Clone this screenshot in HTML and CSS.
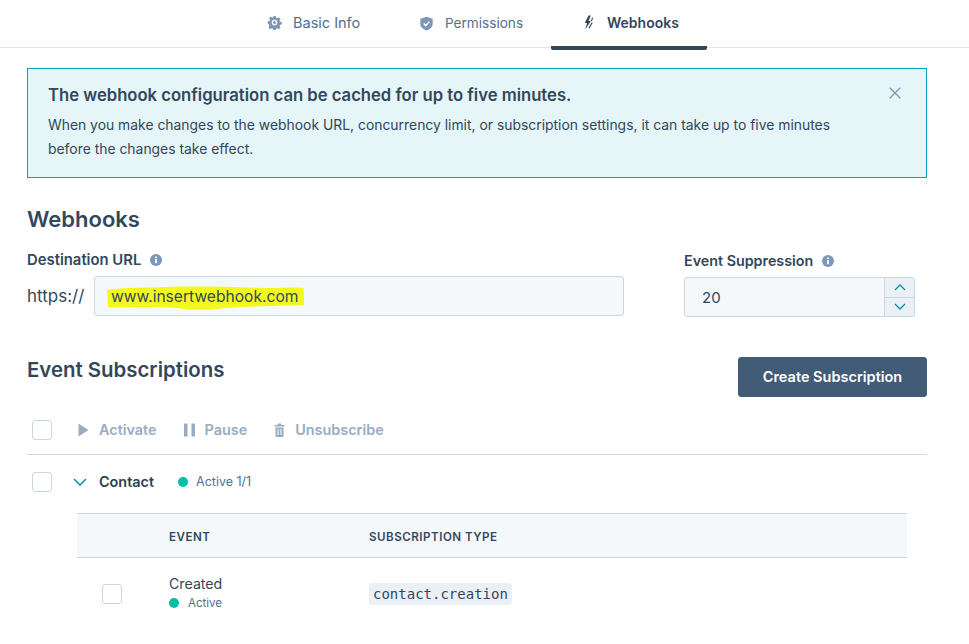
FILE: index.html
```html
<!DOCTYPE html>
<html lang="en">
<head>
<meta charset="utf-8">
<title>Webhooks</title>
<link rel="stylesheet" href="styles.css">
</head>
<body>
<nav class="tabs">
  <a class="tab tab-basic"><svg class="tab-icon" viewBox="0 0 16 16"><path fill="#7c98b6" fill-rule="evenodd" d="M6.7 1h2.6l.4 1.900 1.200.5 1.700-1 1.800 1.800-1 1.700.5 1.200 1.900.4v2.600l-1.900.4-.5 1.200 1 1.700-1.800 1.800-1.700-1-1.200.5-.4 1.900H6.700l-.4-1.900-1.200-.5-1.700 1-1.800-1.800 1-1.700-.5-1.200L.8 9.300V6.700l1.900-.4.5-1.200-1-1.700 1.800-1.800 1.700 1 1.200-.5zM8 5a3 3 0 1 0 0 6 3 3 0 0 0 0-6z"/><circle cx="8" cy="8" r="1.600" fill="#7c98b6"/></svg>Basic Info</a>
  <a class="tab tab-perm"><svg class="tab-icon" viewBox="0 0 16 16"><path fill="#7c98b6" d="M8 .8 14.600 3v5c0 3.700-2.700 6.200-6.600 7.400C4.100 14.200 1.400 11.700 1.400 8V3z"/><path fill="none" stroke="#fff" stroke-width="1.600" d="m5 8 2.200 2.200L11 6.200"/></svg>Permissions</a>
  <a class="tab tab-active"><svg class="tab-icon" viewBox="0 0 16 16"><path fill="#33475b" d="M8 .5 4 8.500h2.500L4.500 15.500l6-9H8L10.500.5z"/><path fill="none" stroke="#33475b" stroke-width="1.200" d="M12.500 3 11 6.500M12 8l-3.500 6"/></svg>Webhooks</a>
</nav>
<main class="content">
  <section class="alert">
    <h2 class="alert-title">The webhook configuration can be cached for up to five minutes.</h2>
    <p class="alert-text">When you make changes to the webhook URL, concurrency limit, or subscription settings, it can take up to five minutes before the changes take effect.</p>
    <svg class="alert-close" viewBox="0 0 12 12"><path fill="none" stroke="#7c98b6" stroke-width="1.300" d="m.7.7 10.600 10.600M11.300.7.700 11.300"/></svg>
  </section>

  <h1 class="section-title">Webhooks</h1>

  <div class="fields">
    <div class="field-url">
      <div class="field-label">Destination URL<svg class="info" viewBox="0 0 12 12"><circle cx="6" cy="6" r="6" fill="#7c98b6"/><rect x="5.100" y="5" width="1.800" height="4.200" fill="#fff"/><circle cx="6" cy="3.300" r="1" fill="#fff"/></svg></div>
      <div class="url-row">
        <span class="prefix">https://</span>
        <div class="input url-input"><span class="marker"><svg class="marker-ink" viewBox="0 0 198 24" preserveAspectRatio="none"><path fill="#f4f91d" d="M1 4C20 1 40 2 60 1c30-1 70 0 100 1 15 0 30-1 37 0l1 17c-28 1-48 1-78 3-20 2-35 2-50 0-25-2-50 0-68-1z"/></svg>www.insertwebhook.com</span></div>
      </div>
    </div>
    <div class="field-num">
      <div class="field-label">Event Suppression<svg class="info" viewBox="0 0 12 12"><circle cx="6" cy="6" r="6" fill="#7c98b6"/><rect x="5.100" y="5" width="1.800" height="4.200" fill="#fff"/><circle cx="6" cy="3.300" r="1" fill="#fff"/></svg></div>
      <div class="input num-input">
        <span class="num-value">20</span>
        <div class="stepper">
          <span class="step"><svg viewBox="0 0 12 7"><path fill="none" stroke="#0091ae" stroke-width="1.300" d="m1 6 5-5 5 5"/></svg></span>
          <span class="step"><svg viewBox="0 0 12 7"><path fill="none" stroke="#0091ae" stroke-width="1.300" d="m1 1 5 5 5-5"/></svg></span>
        </div>
      </div>
    </div>
  </div>

  <div class="subs-head">
    <h2 class="subs-title">Event Subscriptions</h2>
    <button class="primary">Create Subscription</button>
  </div>

  <div class="toolbar">
    <span class="check"></span>
    <span class="action action-first"><svg viewBox="0 0 10 14"><path fill="#99acc2" d="M0 .5 10 7 0 13.500z"/></svg>Activate</span>
    <span class="action"><svg viewBox="0 0 11 14"><rect x="0" y=".5" width="3.500" height="13" fill="#99acc2"/><rect x="7.500" y=".5" width="3.500" height="13" fill="#99acc2"/></svg>Pause</span>
    <span class="action"><svg viewBox="0 0 10 14"><path fill="#99acc2" d="M3.500.5h3l.5 1.500h3v1.500H0V2h3zM1 4.500h8V13a1 1 0 0 1-1 1H2a1 1 0 0 1-1-1zm2 1.500v6h1V6zm3 0v6h1V6z"/></svg>Unsubscribe</span>
  </div>

  <div class="group">
    <span class="check"></span>
    <svg class="caret" viewBox="0 0 14 8"><path fill="none" stroke="#0091ae" stroke-width="1.500" d="m1 1 6 6 6-6"/></svg>
    <span class="group-name">Contact</span>
    <span class="dot dot-group"></span>
    <span class="status">Active 1/1</span>
  </div>

  <div class="table">
    <div class="thead">
      <span class="col-event">EVENT</span>
      <span class="col-type">SUBSCRIPTION TYPE</span>
    </div>
    <div class="row">
      <span class="check row-check"></span>
      <div class="col-event">
        <div class="event-name">Created</div>
        <div class="event-status"><span class="dot dot-row"></span>Active</div>
      </div>
      <div class="col-type"><code class="code">contact.creation</code></div>
    </div>
  </div>
</main>
</body>
</html>
```
FILE: styles.css
```css
* { box-sizing: border-box; }
html, body { margin: 0; height: 644px; overflow: hidden; }
body { background: #fff; color: #33475b; font-family: "Inter", "Liberation Sans", sans-serif; }

.tabs { height: 48px; border-bottom: 1px solid #dfe3eb; display: flex; padding-left: 231px; }
.tab { display: flex; align-items: center; height: 47px; font-size: 14px; color: #516f90; padding-bottom: 1px; }
.tab-icon { width: 15px; height: 15px; margin-right: 11px; flex: none; }
.tab-basic { width: 152px; padding: 0 0 2px 36px; font-size: 14.500px; }
.tab-perm { width: 168px; padding-left: 36px; font-size: 13.600px; }
.tab-active { width: 156px; height: 50px; padding-left: 30px; padding-bottom: 1px; font-weight: 600; color: #33475b; border-bottom: 4px solid #33475b; border-radius: 2px; }

.content { padding: 20px 42px 0 27px; }

.alert { position: relative; height: 110px; background: #e5f5f8; border: 1px solid #00a4bd; padding: 14px 20px 0; }
.alert-title { margin: 0 0 6px; font-size: 16.650px; line-height: 24px; font-weight: 600; color: #33475b; }
.alert-text { margin: 0; width: 800px; font-size: 13.900px; line-height: 24px; color: #33475b; }
.alert-close { position: absolute; top: 18px; right: 25px; width: 12px; height: 12px; }

.section-title { margin: 27px 0 0; font-size: 22px; line-height: 28px; font-weight: 600; color: #33475b; }

.fields { display: flex; margin-top: 18px; }
.field-url { width: 657px; }
.field-num { width: 231px; }
.field-label { display: flex; align-items: center; font-size: 14.850px; line-height: 18px; font-weight: 600; color: #33475b; height: 18px; }
.field-num .field-label { margin-top: 1px; font-size: 14.300px; }
.info { width: 12px; height: 12px; margin-left: 9px; }

.url-row { display: flex; align-items: center; margin-top: 7px; }
.prefix { width: 67px; font-size: 17px; color: #33475b; }
.input { height: 40px; background: #f5f8fa; border: 1px solid #cbd6e2; border-radius: 3px; font-size: 15px; color: #33475b; }
.url-input { width: 530px; display: flex; align-items: center; padding-left: 11px; font-size: 15.600px; }
.marker { position: relative; isolation: isolate; padding: 2px 6px 2px 5px; line-height: 19px; }
.marker-ink { position: absolute; z-index: -1; left: 0; top: 1px; width: 100%; height: 24px; }
.num-input { width: 231px; margin-top: 7px; display: flex; align-items: center; padding-left: 17px; position: relative; }
.num-value { flex: 1; }
.stepper { width: 30px; height: 38px; border-left: 1px solid #cbd6e2; display: flex; flex-direction: column; background: #eaf0f6; border-radius: 0 3px 3px 0; }
.step { flex: 1; display: flex; align-items: center; justify-content: center; }
.step + .step { border-top: 1px solid #cbd6e2; }
.step svg { width: 12px; height: 7px; }

.subs-head { display: flex; justify-content: space-between; align-items: center; margin-top: 40px; height: 40px; }
.subs-title { margin: 0 0 14px; font-size: 20.400px; font-weight: 600; line-height: 26px; color: #33475b; }
.primary { width: 189px; height: 40px; padding-bottom: 2px; background: #425b76; color: #fff; border: 1px solid #425b76; border-radius: 3px; font: 600 14.500px "Inter", "Liberation Sans", sans-serif; }

.check { display: block; width: 20px; height: 20px; border: 1px solid #cbd6e2; border-radius: 3px; background: #fff; flex: none; }

.toolbar { display: flex; align-items: center; height: 53px; margin-top: 5px; padding: 3px 0 0 5px; border-bottom: 1px solid #cbd6e2; font-size: 14.400px; font-weight: 600; color: #99acc2; }
.action { display: flex; align-items: center; margin-right: 27px; }
.action svg { height: 14px; width: 11px; margin-right: 10px; }
.action-first { margin-left: 26px; }

.group { display: flex; align-items: center; height: 53px; padding-left: 5px; }
.caret { width: 14px; height: 8px; margin-left: 21px; }
.group-name { margin-left: 12px; font-size: 14.400px; font-weight: 600; color: #2e3f50; }
.dot { display: inline-block; width: 10px; height: 10px; border-radius: 50%; background: #00bda5; flex: none; }
.dot-group { margin-left: 24px; }
.status { margin-left: 8px; font-size: 12.500px; color: #516f90; }

.table { margin: 5px 20px 0 50px; }
.thead { display: flex; align-items: center; height: 45px; padding-top: 2px; background: #f5f8fa; border-top: 1px solid #cbd6e2; border-bottom: 1px solid #cbd6e2; font-size: 11.600px; font-weight: 600; letter-spacing: .5px; color: #33475b; }
.col-event { margin-left: 92px; width: 200px; }
.col-type { flex: none; }
.row { display: flex; align-items: center; height: 72px; }
.row-check { margin-left: 25px; }
.row .col-event { margin: -4px 0 0 47px; }
.event-name { font-size: 14.200px; line-height: 18px; color: #33475b; }
.event-status { display: flex; align-items: center; font-size: 11.500px; line-height: 16px; color: #516f90; margin-top: 2px; margin-bottom: -1px; }
.dot-row { margin-right: 9px; }
.code { display: inline-block; background: #eaf0f6; border-radius: 3px; padding: 1px 4px; font: 14px/20px "DejaVu Sans Mono", "Liberation Mono", monospace; color: #33475b; }
```
